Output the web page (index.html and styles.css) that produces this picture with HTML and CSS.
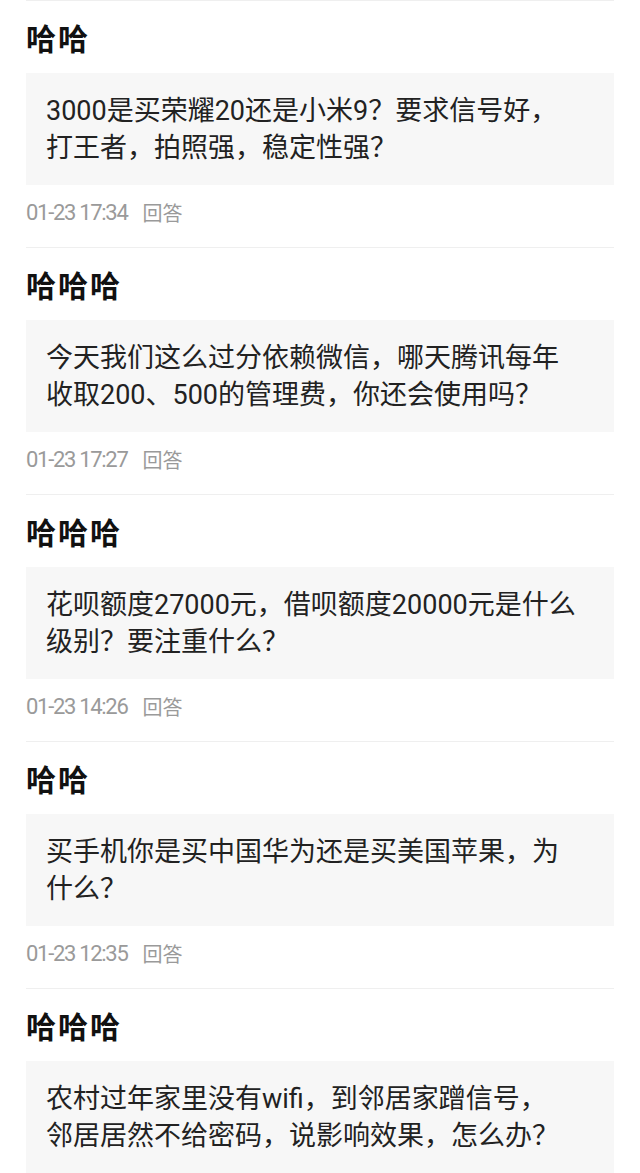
FILE: index.html
```html
<!DOCTYPE html>
<html lang="zh-CN">
<head>
    <meta charset="UTF-8">
    <meta name="viewport" content="width=device-width, initial-scale=1.0">
    <title>我的提问</title>
    <link rel="stylesheet" href="styles.css">
</head>
<body>
    <div class="question-list">
        <div class="question">
            <div class="asker">哈哈</div>
            <div class="question-box">3000是买荣耀20还是小米9？要求信号好，<br>打王者，拍照强，稳定性强？</div>
            <div class="meta"><span class="time">01-23 17:34</span><span class="reply">回答</span></div>
        </div>

        <div class="question">
            <div class="asker">哈哈哈</div>
            <div class="question-box">今天我们这么过分依赖微信，哪天腾讯每年<br>收取200、500的管理费，你还会使用吗？</div>
            <div class="meta"><span class="time">01-23 17:27</span><span class="reply">回答</span></div>
        </div>

        <div class="question">
            <div class="asker">哈哈哈</div>
            <div class="question-box">花呗额度27000元，借呗额度20000元是什么<br>级别？要注重什么？</div>
            <div class="meta"><span class="time">01-23 14:26</span><span class="reply">回答</span></div>
        </div>

        <div class="question">
            <div class="asker">哈哈</div>
            <div class="question-box">买手机你是买中国华为还是买美国苹果，为<br>什么？</div>
            <div class="meta"><span class="time">01-23 12:35</span><span class="reply">回答</span></div>
        </div>

        <div class="question">
            <div class="asker">哈哈哈</div>
            <div class="question-box">农村过年家里没有wifi，到邻居家蹭信号，<br>邻居居然不给密码，说影响效果，怎么办？</div>
        </div>
    </div>
</body>
</html>
```

FILE: styles.css
```css
:root {
    --line-color: #efefef;
    --box-color: #f7f7f7;
    --muted: #9a9a9a;
}

body {
    margin: 0;
    background: #fff;
    color: #222;
    font-family: Roboto, "Noto Sans CJK SC", sans-serif;
}

.question-list {
    margin: 0 26px;
    border-top: 1px solid var(--line-color);
}

.question {
    padding: 19px 0 20px;
    border-bottom: 1px solid var(--line-color);
}

.asker {
    font-size: 30px;
    line-height: 40px;
    font-weight: bold;
    letter-spacing: 2px;
    color: #111;
}

.question-box {
    margin-top: 13px;
    padding: 20px 20px 18px;
    background: var(--box-color);
    font-size: 27px;
    line-height: 37px;
    color: #222;
}

.meta {
    display: flex;
    align-items: center;
    gap: 15px;
    margin-top: 12px;
    height: 30px;
    color: var(--muted);
}

.time {
    font-size: 22px;
    letter-spacing: -1.3px;
}

.reply {
    font-size: 20px;
}
```
